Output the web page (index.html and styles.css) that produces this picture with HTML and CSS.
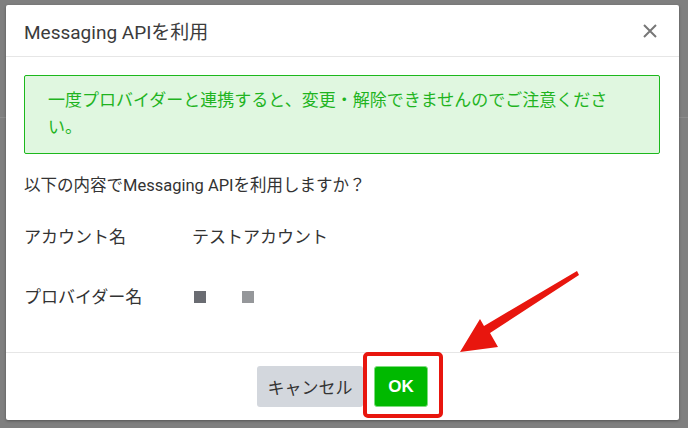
FILE: index.html
```html
<!DOCTYPE html>
<html lang="ja">
<head>
<meta charset="utf-8">
<link rel="stylesheet" href="styles.css">
</head>
<body>
<div class="backdrop">
  <div class="bg-line"></div>
</div>
<div class="modal">
  <div class="modal-header">
    <h1 class="modal-title">Messaging APIを利用</h1>
    <button class="close-btn" aria-label="閉じる">
      <svg width="16" height="16" viewBox="0 0 16 16"><path d="M2 2L14 14M14 2L2 14" stroke="#777" stroke-width="2" fill="none"/></svg>
    </button>
  </div>
  <div class="modal-body">
    <div class="notice">一度プロバイダーと連携すると、変更・解除できませんのでご注意ください。</div>
    <p class="question">以下の内容でMessaging APIを利用しますか？</p>
    <div class="row row-account">
      <span class="label">アカウント名</span>
      <span class="value">テストアカウント</span>
    </div>
    <div class="row row-provider">
      <span class="label">プロバイダー名</span>
      <span class="value"><span class="blk blk-dark"></span><span class="blk blk-light"></span></span>
    </div>
  </div>
  <div class="modal-footer">
    <button class="btn btn-cancel">キャンセル</button>
    <button class="btn btn-ok">OK</button>
  </div>
</div>
<div class="highlight"></div>
<svg class="arrow" width="688" height="428" viewBox="0 0 688 428">
  <polygon points="460,352 480,319 484,326 577,271 579,275 490,333 498,347" fill="#e8160e"/>
</svg>
</body>
</html>
```

FILE: styles.css
```css
html, body {
  margin: 0;
  padding: 0;
}
body {
  width: 688px;
  height: 428px;
  background: #7f7f7f;
  font-family: Roboto, "Noto Sans CJK JP", sans-serif;
  color: #333;
  position: relative;
  overflow: hidden;
}
.backdrop {
  position: absolute;
  inset: 0;
}
.bg-line {
  position: absolute;
  left: 0;
  right: 0;
  top: 117px;
  height: 1px;
  background: #8c8c8c;
}
.modal {
  position: absolute;
  left: 6px;
  top: 5px;
  width: 673px;
  height: 415px;
  background: #fff;
  border-radius: 2px;
  box-shadow: 0 1px 3px rgba(0,0,0,0.35);
  display: flex;
  flex-direction: column;
}
.modal-header {
  height: 51px;
  border-bottom: 1px solid #e6e6e6;
  display: flex;
  align-items: center;
  justify-content: space-between;
  padding: 0 21px 0 18px;
  flex-shrink: 0;
}
.modal-title {
  margin: 0;
  font-size: 19px;
  font-weight: 400;
  color: #3b3b3b;
}
.close-btn {
  border: 0;
  background: none;
  padding: 0;
  width: 16px;
  height: 16px;
  display: flex;
}
.modal-body {
  flex: 1;
  padding: 18px 19px 0 18px;
}
.notice {
  border: 1px solid #1cb81c;
  background: #e0f7e0;
  color: #1fb41f;
  border-radius: 2px;
  font-size: 17px;
  line-height: 27px;
  padding: 11px 23px 12px 23px;
}
.question {
  margin: 20px 0 0;
  font-size: 16.5px;
  line-height: 24px;
}
.row {
  display: flex;
  align-items: center;
  font-size: 17px;
  line-height: 24px;
}
.row-account {
  margin-top: 27px;
}
.row-provider {
  margin-top: 36px;
}
.label {
  width: 168px;
}
.value {
  display: flex;
  align-items: center;
}
.blk {
  display: inline-block;
  width: 12px;
  height: 12px;
}
.blk-dark {
  background: #6a6c72;
  margin-left: 2px;
}
.blk-light {
  background: #95979a;
  margin-left: 36px;
}
.modal-footer {
  height: 67px;
  border-top: 1px solid #e6e6e6;
  display: flex;
  align-items: center;
  justify-content: center;
  gap: 11px;
  flex-shrink: 0;
}
.btn {
  height: 41px;
  border-radius: 3px;
  font-family: Roboto, "Noto Sans CJK JP", sans-serif;
  font-size: 17px;
  border: 0;
  padding: 0;
}
.btn-cancel {
  width: 106px;
  background: #d3d7dd;
  color: #333;
}
.btn-ok {
  width: 54px;
  background: #00b900;
  border: 1px solid #7fdc7f;
  color: #fff;
  font-weight: 700;
  font-family: "Liberation Sans", Arial, sans-serif;
}
.highlight {
  position: absolute;
  left: 363px;
  top: 352px;
  width: 72px;
  height: 58px;
  border: 4px solid #e8160e;
  border-radius: 5px;
}
.arrow {
  position: absolute;
  left: 0;
  top: 0;
}
```
